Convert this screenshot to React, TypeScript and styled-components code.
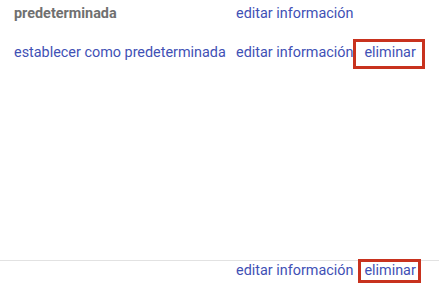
import React from "react";
import styled, { createGlobalStyle } from "styled-components";

const Global = createGlobalStyle`
  html, body { margin: 0; padding: 0; background: #ffffff; }
  body { font-family: Roboto, "Noto Sans", Arial, sans-serif; font-size: 14.4px; }
  * { box-sizing: border-box; }
`;

const Page = styled.div`
  width: 439px;
  height: 292px;
  background: #fff;
  display: flex;
  flex-direction: column;
`;

const Body = styled.div`
  height: 260px;
  padding-left: 14px;
  display: flex;
  flex-direction: column;
`;

const Row = styled.div<{ $height: number; $top: number }>`
  display: flex;
  align-items: flex-start;
  height: ${(p) => p.$height}px;
  padding-top: ${(p) => p.$top}px;
`;

const NameCell = styled.div<{ $bold?: boolean; $offset?: number }>`
  width: 222px;
  line-height: 20px;
  padding-top: ${(p) => p.$offset ?? 0}px;
  font-weight: ${(p) => (p.$bold ? 700 : 400)};
  color: ${(p) => (p.$bold ? "#707070" : "#3f51b5")};
  white-space: nowrap;
`;

const Actions = styled.div`
  display: flex;
  align-items: flex-start;
`;

const Link = styled.span<{ $offset?: number }>`
  color: #3f51b5;
  line-height: 20px;
  padding-top: ${(p) => p.$offset ?? 0}px;
  white-space: nowrap;
  cursor: pointer;
`;

const MarkedLink = styled.span<{ $tight?: boolean }>`
  display: inline-block;
  color: #3f51b5;
  border: 3px solid #c8321e;
  white-space: nowrap;
  cursor: pointer;
  ${(p) =>
    p.$tight
      ? `height: 24px; line-height: 18px; padding: 0 2px 0 3px; margin-left: 5px; margin-top: -2px;`
      : `line-height: 20px; padding: 1px 6px 3px 8px;`}
`;

const Footer = styled.div`
  border-top: 1px solid #e2e2e2;
  height: 32px;
  padding-left: 236px;
  display: flex;
  align-items: flex-start;
`;

export default function App() {
  return (
    <>
      <Global />
      <Page>
        <Body>
          <Row $height={39} $top={4}>
            <NameCell $bold>predeterminada</NameCell>
            <Actions>
              <Link>editar información</Link>
            </Actions>
          </Row>
          <Row $height={40} $top={0}>
            <NameCell $offset={4}>establecer como predeterminada</NameCell>
            <Actions>
              <Link $offset={4}>editar información</Link>
              <MarkedLink>eliminar</MarkedLink>
            </Actions>
          </Row>
        </Body>
        <Footer>
          <Actions>
            <Link>editar información</Link>
            <MarkedLink $tight>eliminar</MarkedLink>
          </Actions>
        </Footer>
      </Page>
    </>
  );
}
